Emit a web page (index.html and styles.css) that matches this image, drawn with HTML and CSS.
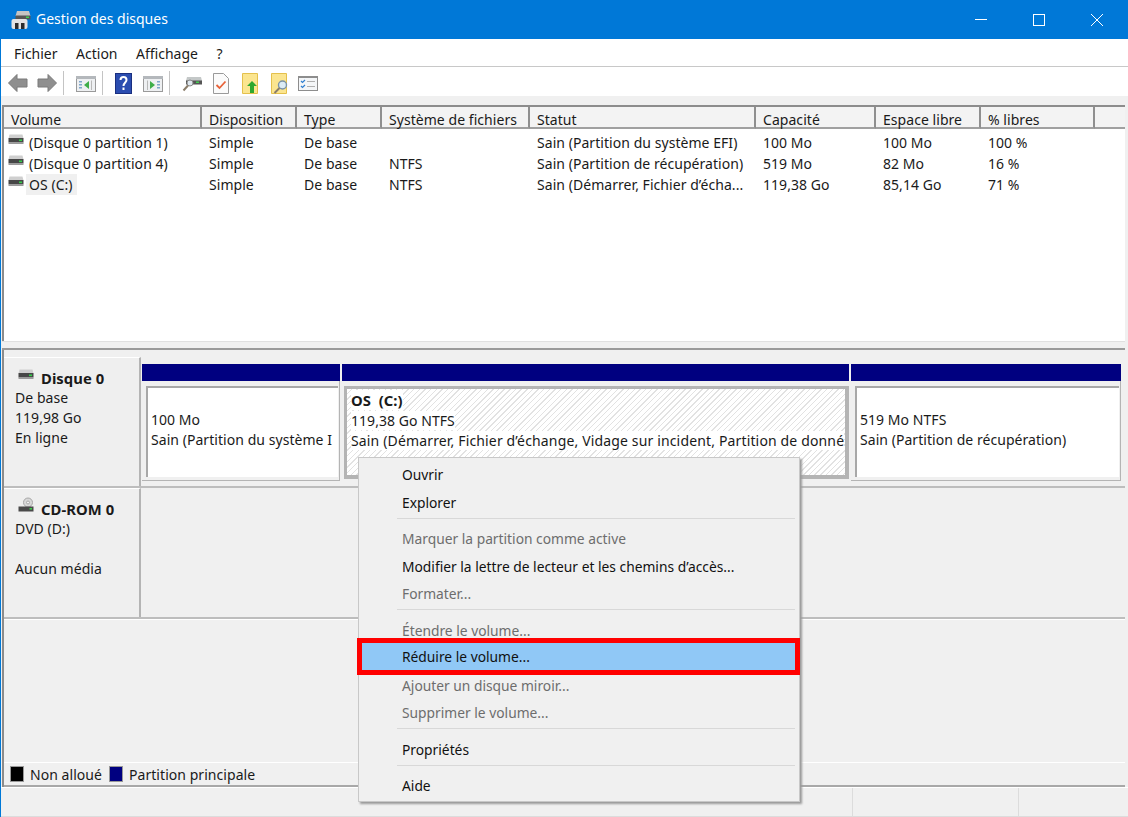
FILE: index.html
```html
<!DOCTYPE html>
<html lang="fr">
<head>
  <meta charset="UTF-8">
  <title>Gestion des disques</title>
  <link rel="stylesheet" href="styles.css">
</head>
<body>

  <!-- shared drive icon -->
  <svg class="defs" width="0" height="0">
    <symbol id="drive" viewBox="0 0 16 12">
      <path d="M1.500 0.500h13l1 4H0.500z" fill="#cfcfcf"/>
      <rect x="0.500" y="4" width="15" height="4.500" fill="#474747"/>
      <rect x="0.500" y="8.500" width="15" height="1.500" fill="#9a9a9a"/>
      <rect x="11" y="5.500" width="3" height="1.600" fill="#35d04a"/>
    </symbol>
  </svg>

  <div class="window">
    <header class="titlebar">
      <svg class="app-icon" viewBox="0 0 20 20">
        <path d="M6 1h12l1.500 5H4.500z" fill="#c4c4c4"/>
        <rect x="4.500" y="5.500" width="15" height="4" fill="#555"/>
        <rect x="15" y="6.500" width="3" height="1.500" fill="#3fd04f"/>
        <rect x="0.500" y="9" width="16" height="10" rx="2" fill="#e2e2e2"/>
        <rect x="4" y="13" width="3.500" height="6" fill="#2b2b2b"/>
        <rect x="10" y="13" width="3.500" height="6" fill="#2b2b2b"/>
      </svg>
      <span class="title">Gestion des disques</span>
      <div class="win-buttons">
        <svg viewBox="0 0 58 39"><path d="M23 19.500h12" stroke="#fff" fill="none"/></svg>
        <svg viewBox="0 0 58 39"><rect x="23.500" y="14.500" width="11" height="11" stroke="#fff" fill="none"/></svg>
        <svg viewBox="0 0 58 39"><path d="M23 14l12 12M35 14L23 26" stroke="#fff" fill="none"/></svg>
      </div>
    </header>

    <nav class="menubar">
      <span>Fichier</span>
      <span>Action</span>
      <span>Affichage</span>
      <span>?</span>
    </nav>

    <div class="toolbar">
      <svg class="tool" viewBox="0 0 22 22"><path d="M1.500 11L10 2.500V7h10v8H10v4.500z" fill="#8f8f8f" stroke="#7a7a7a" stroke-linejoin="round"/></svg>
      <svg class="tool" viewBox="0 0 22 22"><path d="M20.500 11L12 2.500V7H2v8h10v4.500z" fill="#8f8f8f" stroke="#7a7a7a" stroke-linejoin="round"/></svg>
      <i class="tool-sep"></i>
      <svg class="tool" viewBox="0 0 22 22">
        <rect x="1.500" y="4.500" width="19" height="15" fill="#eef0f2" stroke="#9a9a9a"/>
        <rect x="1" y="4" width="20" height="3" fill="#b4b8bc"/>
        <path d="M4 9h3v1.500H4zM4 12h3v1.500H4zM4 15h3v1.500H4z" fill="#7ea6cc"/>
        <path d="M14 9v8l-5-4z" fill="#3fae4a"/>
        <path d="M16.500 8.500v9.500" stroke="#b8b8b8"/>
      </svg>
      <i class="tool-sep"></i>
      <svg class="tool" viewBox="0 0 22 22">
        <rect x="2.500" y="1.500" width="16" height="20" fill="#2b4db0" stroke="#1a2f80"/>
        <path d="M7.500 8c0-4 6-4 6 0 0 2.500-3 2.500-3 6" fill="none" stroke="#fff" stroke-width="2"/>
        <rect x="9.500" y="15.500" width="2" height="2.500" fill="#fff"/>
      </svg>
      <svg class="tool" viewBox="0 0 22 22">
        <rect x="1.500" y="4.500" width="19" height="15" fill="#eef0f2" stroke="#9a9a9a"/>
        <rect x="1" y="4" width="20" height="3" fill="#b4b8bc"/>
        <path d="M15 9h3v1.500h-3zM15 12h3v1.500h-3zM15 15h3v1.500h-3z" fill="#7ea6cc"/>
        <path d="M8 9v8l5-4z" fill="#3fae4a"/>
        <path d="M5.500 8.500v9.500" stroke="#b8b8b8"/>
      </svg>
      <i class="tool-sep"></i>
      <svg class="tool" viewBox="0 0 22 22">
        <path d="M6 5h14l1 4H5z" fill="#c4c8c8"/>
        <rect x="5" y="8.500" width="16" height="4" fill="#555"/>
        <rect x="15" y="9.500" width="3" height="1.500" fill="#3fd04f"/>
        <circle cx="9" cy="11" r="3" fill="#dfe8ef" stroke="#8a8a8a"/>
        <path d="M7 13.500l-4.500 5" stroke="#8a7d6a" stroke-width="2"/>
      </svg>
      <svg class="tool" viewBox="0 0 22 22">
        <path d="M3.500 1.500h10l5 5v15h-15z" fill="#fbfbfb" stroke="#9a9a9a"/>
        <path d="M6.500 13l3 3 6-6.500" fill="none" stroke="#e8633a" stroke-width="1.800"/>
      </svg>
      <svg class="tool" viewBox="0 0 22 22">
        <path d="M3.500 1.500h15v20h-15z" fill="#fbe58f" stroke="#e4c04c"/>
        <path d="M13 9l5 5h-3v7h-4v-7H8z" fill="#2ea82e"/>
      </svg>
      <svg class="tool" viewBox="0 0 22 22">
        <path d="M3.500 1.500h15v20h-15z" fill="#fbe58f" stroke="#e4c04c"/>
        <circle cx="14.500" cy="13" r="4" fill="#dcecf5" stroke="#7b93a5" stroke-width="1.400"/>
        <path d="M11.500 16l-5 5" stroke="#8a7d6a" stroke-width="2"/>
      </svg>
      <svg class="tool" viewBox="0 0 22 22">
        <rect x="1.500" y="4.500" width="19" height="14" fill="#f4f6f8" stroke="#8d8d8d"/>
        <rect x="1" y="4" width="20" height="2" fill="#8d8d8d"/>
        <path d="M4 9l1.500 1.500L8 8M4 14l1.500 1.500L8 13" fill="none" stroke="#2f7fd0" stroke-width="1.200"/>
        <path d="M10 9.500h8M10 14.500h8" stroke="#b0b0b0"/>
      </svg>
    </div>

    <main class="content">
      <section class="volumes">
        <div class="vol-table">
          <div class="th">Volume</div>
          <div class="th">Disposition</div>
          <div class="th">Type</div>
          <div class="th">Système de fichiers</div>
          <div class="th">Statut</div>
          <div class="th">Capacité</div>
          <div class="th">Espace libre</div>
          <div class="th">% libres</div>
          <div class="th th-rest"></div>

          <div class="td td-vol"><svg class="drive"><use href="#drive"/></svg><span>(Disque 0 partition 1)</span></div>
          <div class="td">Simple</div>
          <div class="td">De base</div>
          <div class="td"></div>
          <div class="td">Sain (Partition du système EFI)</div>
          <div class="td">100 Mo</div>
          <div class="td">100 Mo</div>
          <div class="td">100 %</div>
          <div class="td"></div>

          <div class="td td-vol"><svg class="drive"><use href="#drive"/></svg><span>(Disque 0 partition 4)</span></div>
          <div class="td">Simple</div>
          <div class="td">De base</div>
          <div class="td">NTFS</div>
          <div class="td">Sain (Partition de récupération)</div>
          <div class="td">519 Mo</div>
          <div class="td">82 Mo</div>
          <div class="td">16 %</div>
          <div class="td"></div>

          <div class="td td-vol"><svg class="drive"><use href="#drive"/></svg><span class="selected">OS (C:)</span></div>
          <div class="td">Simple</div>
          <div class="td">De base</div>
          <div class="td">NTFS</div>
          <div class="td">Sain (Démarrer, Fichier d’écha...</div>
          <div class="td">119,38 Go</div>
          <div class="td">85,14 Go</div>
          <div class="td">71 %</div>
          <div class="td"></div>
        </div>
      </section>

      <div class="splitter"></div>

      <section class="disks">
        <div class="disk-row">
          <div class="disk-label">
            <div class="disk-name"><svg class="drive"><use href="#drive"/></svg><b>Disque 0</b></div>
            <div>De base</div>
            <div>119,98 Go</div>
            <div>En ligne</div>
          </div>
          <div class="partitions">
            <div class="part part-efi">
              <div class="part-bar"></div>
              <div class="part-frame">
                <div class="part-body">
                  <p>&nbsp;</p>
                  <p>100 Mo</p>
                  <p>Sain (Partition du système I</p>
                </div>
              </div>
            </div>
            <div class="part part-os">
              <div class="part-bar"></div>
              <div class="part-frame">
                <div class="part-body hatched">
                  <p><b>OS&nbsp; (C:)</b></p>
                  <p><span>119,38 Go NTFS</span></p>
                  <p class="long"><span>Sain (Démarrer, Fichier d’échange, Vidage sur incident, Partition de donné</span></p>
                </div>
              </div>
            </div>
            <div class="part part-rec">
              <div class="part-bar"></div>
              <div class="part-frame">
                <div class="part-body">
                  <p>&nbsp;</p>
                  <p>519 Mo NTFS</p>
                  <p>Sain (Partition de récupération)</p>
                </div>
              </div>
            </div>
          </div>
        </div>

        <div class="disk-row">
          <div class="disk-label">
            <div class="disk-name">
              <svg class="drive cd" viewBox="0 0 16 16">
                <circle cx="10" cy="5" r="4.500" fill="#d8d8d8" stroke="#a8a8a8"/>
                <circle cx="10" cy="5" r="1.500" fill="#f4f4f4" stroke="#a8a8a8"/>
                <rect x="0.500" y="9" width="15" height="5" fill="#4a4a4a"/>
                <rect x="11.500" y="10.500" width="2.500" height="1.600" fill="#3fd04f"/>
              </svg>
              <b>CD-ROM 0</b>
            </div>
            <div>DVD (D:)</div>
            <div>&nbsp;</div>
            <div>Aucun média</div>
          </div>
        </div>

        <div class="disk-empty"></div>

        <footer class="legend">
          <i class="swatch swatch-free"></i><span>Non alloué</span>
          <i class="swatch swatch-primary"></i><span>Partition principale</span>
        </footer>
      </section>
    </main>

    <div class="statusbar">
      <div></div>
      <div></div>
      <div></div>
    </div>
  </div>

  <!-- context menu of the OS (C:) partition -->
  <ul class="context-menu">
    <li>Ouvrir</li>
    <li>Explorer</li>
    <li class="sep"></li>
    <li class="off">Marquer la partition comme active</li>
    <li>Modifier la lettre de lecteur et les chemins d’accès...</li>
    <li class="off">Formater...</li>
    <li class="sep"></li>
    <li class="off">Étendre le volume...</li>
    <li class="hot">Réduire le volume...</li>
    <li class="off">Ajouter un disque miroir...</li>
    <li class="off">Supprimer le volume...</li>
    <li class="sep"></li>
    <li>Propriétés</li>
    <li class="sep"></li>
    <li>Aide</li>
  </ul>

</body>
</html>
```

FILE: styles.css
```css
body {
  margin: 0;
  padding: 0;
  font-family: "Noto Sans", "Open Sans", sans-serif;
  font-size: 14px;
  letter-spacing: 0.05px;
  color: #1a1a1a;
  background-color: #f0f0f0;
  overflow: hidden;
}
.defs {
  position: absolute;
}
.window {
  width: 1128px;
  height: 817px;
  box-sizing: border-box;
  border-left: 1px solid #0078d7;
  display: flex;
  flex-direction: column;
}

/* title bar */
.titlebar {
  height: 39px;
  margin-left: -1px;
  background-color: #0078d7;
  color: #fff;
  display: flex;
  align-items: center;
  padding-left: 11px;
  flex: none;
}
.app-icon {
  width: 20px;
  height: 20px;
  margin-right: 5px;
}
.title {
  font-size: 14px;
  letter-spacing: 0;
  margin-top: -2px;
}
.win-buttons {
  margin-left: auto;
  padding-right: 2px;
  display: flex;
}
.win-buttons svg {
  width: 58px;
  height: 39px;
}

/* menu + toolbar */
.menubar {
  height: 28px;
  box-sizing: border-box;
  background-color: #fff;
  border-bottom: 1px solid #c8c8c8;
  display: flex;
  align-items: center;
  padding: 2px 0 0 13px;
  gap: 18.5px;
  letter-spacing: 0;
  flex: none;
}
.toolbar {
  height: 29px;
  box-sizing: border-box;
  background-color: #fff;
  display: flex;
  align-items: center;
  padding: 2px 0 0 6px;
  gap: 7px;
  flex: none;
}
.tool {
  width: 22px;
  height: 22px;
  display: block;
}
.tool-sep {
  width: 1px;
  height: 24px;
  margin: 0 3.5px 0 -2px;
  background-color: #c4c4c4;
}

/* volume list */
.content {
  flex: 1;
  display: flex;
  flex-direction: column;
  padding: 9px 3px 0 1px;
  min-height: 0;
}
.volumes {
  height: 234px;
  background-color: #fff;
  border-top: 2px solid #8c8c8c;
  border-left: 2px solid #8c8c8c;
  flex: none;
}
.vol-table {
  display: grid;
  grid-template-columns: 198px 95px 85px 148px 226px 120px 105px 114px 1fr;
  grid-template-rows: 25px;
  grid-auto-rows: 21px;
}
.th {
  height: 22px;
  box-sizing: border-box;
  padding: 1px 0 0 7px;
  line-height: 24px;
  background-color: #f3f3f3;
  border-right: 2px solid #8f8f8f;
  border-bottom: 2px solid #a0a0a0;
  white-space: nowrap;
}
.th-rest {
  border-right: none;
}
.td {
  line-height: 21px;
  padding-left: 7px;
  white-space: nowrap;
  overflow: hidden;
}
.td-vol {
  display: flex;
  align-items: center;
  padding-left: 4px;
}
.drive {
  width: 16px;
  height: 12px;
  margin: -5px 5px 0 0;
  flex: none;
}
.selected {
  background-color: #f0f0f0;
  margin-left: -3px;
  padding: 0 4px 0 3px;
}
.splitter {
  height: 9px;
  box-sizing: border-box;
  border-top: 1px solid #e0e0e0;
  border-bottom: 2px solid #9a9a9a;
  flex: none;
}

/* disks */
.disks {
  flex: 1;
  display: flex;
  flex-direction: column;
  border-left: 2px solid #8c8c8c;
  padding-top: 7px;
  min-height: 0;
}
.disk-row {
  height: 131px;
  box-sizing: border-box;
  display: flex;
  border-bottom: 2px solid #bdbdbd;
  flex: none;
}
.disk-label {
  width: 137px;
  box-sizing: border-box;
  padding: 10px 0 0 11px;
  line-height: 20px;
  background-color: #efefef;
  border-top: 1px solid #fff;
  border-right: 2px solid #b4b4b4;
  flex: none;
}
.disk-name {
  display: flex;
  align-items: center;
  height: 20px;
}
.disk-name b {
  font-size: 14.8px;
}
.disk-name .drive {
  margin: -6px 7px 0 3px;
}
.disk-name .cd {
  height: 17px;
  margin-top: -8px;
}
.partitions {
  flex: 1;
  display: flex;
  padding-left: 1px;
  gap: 2px;
}
.part {
  display: flex;
  flex-direction: column;
  padding-top: 7px;
}
.part-efi {
  width: 198px;
}
.part-os {
  width: 507px;
}
.part-rec {
  width: 270px;
}
.part-bar {
  height: 17px;
  background-color: #000080;
  flex: none;
}
.part-frame {
  height: 100px;
  box-sizing: border-box;
  padding: 5px 1px 3px 4px;
  border-right: 1px solid #b4b4b4;
  border-bottom: 1px solid #b4b4b4;
}
.part-body {
  height: 91px;
  box-sizing: border-box;
  background-color: #fff;
  border-top: 2px solid #a8a8a8;
  border-left: 2px solid #a8a8a8;
  padding: 2px 0 0 3px;
  line-height: 20px;
  overflow: hidden;
  white-space: nowrap;
}
.part-body p {
  margin: 0;
}
.part-os .part-frame {
  padding: 5px 0 2px 2px;
  border: none;
}
.part-os .part-body {
  height: 93px;
  border: 3px solid #b4b4b4;
  border-width: 3px 4px 4px 3px;
  padding: 1px 0 0 4px;
}
.part-os b {
  font-size: 14.8px;
}
.long {
  letter-spacing: 0.15px;
}
.hatched {
  background-image: repeating-linear-gradient(135deg, #fff 0, #fff 3px, #e2e2e2 3px, #e2e2e2 4px);
}
.hatched span,
.hatched b {
  background-color: #fff;
}
.disk-empty {
  flex: 1;
  border-top: 1px solid #fff;
}
.legend {
  height: 25px;
  box-sizing: border-box;
  border-top: 1px solid #fff;
  border-bottom: 2px solid #a8a8a8;
  display: flex;
  align-items: center;
  padding-left: 6px;
  flex: none;
}
.swatch {
  width: 14px;
  height: 16px;
  margin-right: 6px;
  border: 1px solid #999;
  box-sizing: border-box;
}
.swatch-free {
  background-color: #000;
}
.swatch-primary {
  background-color: #000080;
  margin-left: 7px;
}

/* status bar */
.statusbar {
  height: 30px;
  box-sizing: border-box;
  border-top: 1px solid #fff;
  border-bottom: 1px solid #dcdcdc;
  display: grid;
  grid-template-columns: 851px 166px 1fr;
  flex: none;
}
.statusbar div + div {
  border-left: 1px solid #dcdcdc;
}

/* context menu */
.context-menu {
  position: absolute;
  left: 358px;
  top: 457px;
  width: 442px;
  box-sizing: border-box;
  margin: 0;
  padding: 3px 4px 1px 3px;
  list-style: none;
  background-color: #f0f0f0;
  border: 1px solid #c8c8c8;
  box-shadow: 2px 2px 2px #9a9a9a;
  font-size: 13.8px;
  letter-spacing: 0;
}
.context-menu li {
  height: 27.5px;
  line-height: 27px;
  padding-left: 40px;
  color: #111;
}
.context-menu .off {
  color: #6d6d6d;
}
.context-menu .sep {
  height: 1px;
  margin: 1.5px 0 6.5px 35px;
  padding: 0;
  background-color: #d8d8d8;
}
.context-menu .hot {
  height: 26.5px;
  margin: -1px 0 2px;
  background-color: #90c8f6;
  outline: 5px solid #f00;
}
```
